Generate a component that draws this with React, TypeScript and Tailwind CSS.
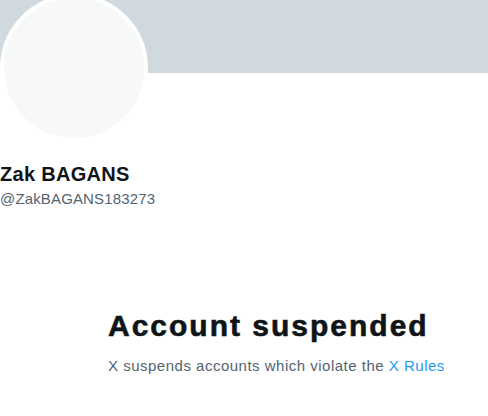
import React from "react";

export default function App() {
  return (
    <div className="w-[488px] h-[416px] overflow-hidden bg-white font-['Liberation_Sans',Arial,sans-serif]">
      {/* Banner */}
      <div className="h-[73px] w-full bg-[#cfd9de]" />

      {/* Avatar */}
      <div className="relative mt-[-79px] w-[148px] h-[148px] rounded-full border-4 border-white bg-[#f7f9f9]" />

      {/* Profile name */}
      <div className="mt-[20px]">
        <div className="text-[20px] leading-[24px] font-bold tracking-[0.3px] text-[#0f1419]">
          Zak BAGANS
        </div>
        <div className="mt-[3px] text-[15px] leading-[20px] tracking-[0.15px] text-[#536471]">
          @ZakBAGANS183273
        </div>
      </div>

      {/* Empty state */}
      <div className="mt-[99px] ml-[108px] w-[340px]">
        <div className="text-[30px] leading-[36px] font-extrabold tracking-[2px] [-webkit-text-stroke:0.6px_#0f1419] text-[#0f1419] whitespace-nowrap">
          Account suspended
        </div>
        <div className="mt-[12px] text-[15px] leading-[20px] tracking-[0.5px] text-[#536471] whitespace-nowrap">
          X suspends accounts which violate the{" "}
          <span className="text-[#1d9bf0]">X Rules</span>
        </div>
      </div>
    </div>
  );
}
